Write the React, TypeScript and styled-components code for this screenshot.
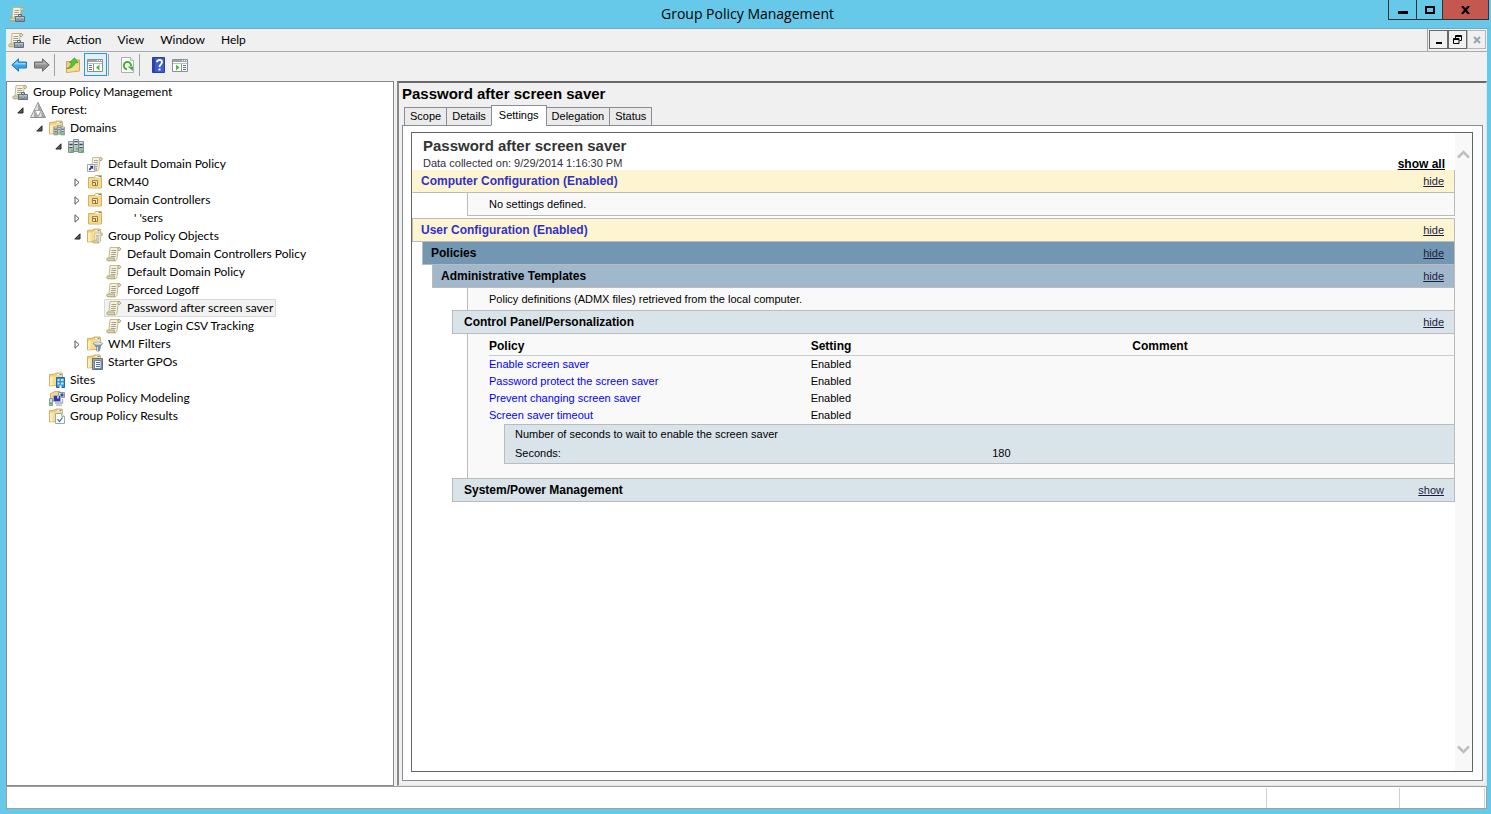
import React from 'react';
import styled, { createGlobalStyle } from 'styled-components';

const ui = 'Lato, "Open Sans", sans-serif';
const titleFont = '"Open Sans", "Noto Sans", sans-serif';
const doc = '"Liberation Sans", Arial, sans-serif';

const Global = createGlobalStyle`
  *, *::before, *::after { box-sizing: border-box; }
  body { margin: 0; background: #66c9ea; color: #000; font: 12px/18px ${ui}; }
  button { margin: 0; padding: 0; border: 0; background: none; color: inherit; font: inherit; }
  h1, h2, h3, p, ul { margin: 0; padding: 0; font-weight: inherit; font-size: inherit; }
  svg { display: block; flex: none; }
`;

const Frame = styled.div`
  min-height: 100vh;
  display: flex;
  flex-direction: column;
  padding: 0 4px 5px 6px;
  background: #66c9ea;
`;

const TitleBar = styled.header`
  display: grid;
  grid-template-columns: 1fr auto 1fr;
  height: 29px;
  margin-right: -2px;
  border-bottom: 1px solid #7fa6bb;
`;
const TitleIcon = styled.div`
  padding: 6px 0 0 3px;
`;
const WindowTitle = styled.h1`
  && { font: 14px/28px ${titleFont}; }
`;
const WindowButtons = styled.div`
  display: flex;
  justify-content: flex-end;
  height: 20px;
`;
const WindowButton = styled.button<{ $w: number; $close?: boolean }>`
  width: ${p => p.$w}px;
  display: grid;
  place-items: center;
  && {
    border: 1px solid #333;
    border-width: 0 ${p => (p.$close ? 1 : 0)}px 1px 1px;
    background: ${p => (p.$close ? '#c45850' : 'transparent')};
  }
`;

const Bars = styled.div`
  background: #f0f0f0;
`;
const MenuRow = styled.div`
  display: flex;
  height: 23px;
  border-bottom: 1px solid #a9abb0;
`;
const MenuBar = styled.nav`
  flex: 1;
  display: flex;
  align-items: center;
  padding-left: 2px;
  border-right: 1px solid #a0a0a0;
`;
const MenuButton = styled.button`
  && { padding: 0 8px; line-height: 20px; }
`;
const ChildButtons = styled.div`
  display: flex;
  padding: 1px 1px 2px 1px;
`;
const ChildButton = styled.button<{ $off?: boolean }>`
  && { border: 1px solid ${p => (p.$off ? '#b4b8bc' : '#696969')}; }
  width: 19px;
  display: grid;
  place-items: center;
`;

const Toolbar = styled.div`
  display: flex;
  align-items: center;
  height: 29px;
  padding: 0 1px 4px;
`;
const Tool = styled.button<{ $on?: boolean }>`
  width: 23px;
  height: 23px;
  display: grid;
  place-items: center;
  && {
    border: 1px solid ${p => (p.$on ? '#2a98dd' : 'transparent')};
    background: ${p => (p.$on ? '#e3f0f9' : 'none')};
  }
`;
const ToolGap = styled.span`
  width: 1px;
  height: 22px;
  margin: 0 6px 0 1px;
  background: #a0a0a0;
`;

const Main = styled.main`
  flex: 1;
  display: flex;
  gap: 3px;
  background: #f0f0f0;
`;
const TreePane = styled.nav`
  width: 388px;
  flex: none;
  padding-top: 1px;
  background: #fff;
  border: 1px solid #828790;
`;
const TreeList = styled.ul`
  list-style: none;
`;
const TreeRow = styled.li<{ $level: number }>`
  display: flex;
  align-items: center;
  height: 18px;
  padding-left: ${p => (p.$level ? p.$level * 19 - 16 : 3)}px;
`;
const Expander = styled.span`
  width: 18px;
  padding: 1px 0 0 7px;
`;
const TreeItem = styled.button<{ $selected?: boolean }>`
  display: flex;
  align-items: center;
  gap: 5px;
  height: 18px;
  && {
    padding: 0 2px 0 1px;
    border: 1px solid ${p => (p.$selected ? '#dadada' : 'transparent')};
    background: ${p => (p.$selected ? '#f2f2f2' : 'none')};
    line-height: 16px;
    white-space: nowrap;
  }
`;
const TreeLabel = styled.span<{ $indent?: boolean }>`
  padding-left: ${p => (p.$indent ? 26 : 0)}px;
`;

const DetailPane = styled.section`
  flex: 1;
  min-width: 0;
  display: flex;
  flex-direction: column;
  padding: 0 3px 4px 3px;
  border: 1px solid #696969;
  border-width: 2px 1px 1px 2px;
  border-color: #696969 #e3e3e3 #e3e3e3 #8a8a8a;
`;
const PaneTitle = styled.h2`
  && { font: bold 15px/22px ${doc}; }
`;
const Tabs = styled.div`
  position: relative;
  z-index: 1;
  display: flex;
  align-items: flex-end;
  height: 21px;
  padding-left: 2px;
  margin-bottom: -1px;
`;
const Tab = styled.button<{ $active?: boolean }>`
  && {
    height: ${p => (p.$active ? 21 : 19)}px;
    padding: 0 ${p => (p.$active ? 7 : 5)}px;
    border: 1px solid #898c95;
    border-bottom-color: ${p => (p.$active ? '#fff' : '#898c95')};
    background: ${p => (p.$active ? '#fff' : '#ebebeb')};
    font: 11px/17px ${doc};
  }
  & + & { margin-left: -1px; }
`;
const TabPanel = styled.div`
  flex: 1;
  display: flex;
  padding: 6px 9px 8px 8px;
  background: #fff;
  border: 1px solid #898c95;
`;
const ReportFrame = styled.div`
  flex: 1;
  display: flex;
  border: 1px solid #646464;
  font: 11px/17px ${doc};
`;
const Report = styled.article`
  flex: 1;
  min-width: 0;
`;
const Scrollbar = styled.div`
  width: 17px;
  display: flex;
  flex-direction: column;
  justify-content: space-between;
  align-items: center;
  padding: 17px 0;
  background: #f8f8f8;
`;

const ReportHead = styled.header`
  display: flex;
  justify-content: space-between;
  height: 37px;
  padding: 3px 10px 0 11px;
  color: #333;
`;
const ReportTitle = styled.h2`
  && { font: bold 15px/19px ${doc}; }
`;
const ShowAll = styled.a`
  align-self: flex-end;
  color: #000;
  font-weight: bold;
  font-size: 12px;
  line-height: 12px;
`;

type Tone = 'main' | 'policies' | 'templates' | 'group';
const tones: Record<Tone, { bg: string; fg: string; indent: number; pad: number }> = {
  main: { bg: '#fdf5d2', fg: '#3131c8', indent: 0, pad: 8 },
  policies: { bg: '#7397b3', fg: '#000', indent: 10, pad: 8 },
  templates: { bg: '#a1b8cc', fg: '#000', indent: 20, pad: 8 },
  group: { bg: '#d9e3ea', fg: '#000', indent: 40, pad: 11 },
};
const Bar = styled.div<{ $tone: Tone; $first?: boolean }>`
  position: relative;
  display: flex;
  justify-content: space-between;
  height: ${p => (p.$first ? 23 : 24)}px;
  margin-left: ${p => tones[p.$tone].indent}px;
  margin-bottom: -1px;
  padding: 0 10px 0 ${p => tones[p.$tone].pad}px;
  line-height: 22px;
  color: ${p => tones[p.$tone].fg};
  background: ${p => tones[p.$tone].bg};
  border: 1px solid #bbb;
  ${p => p.$first && 'border-top: 0; border-left-color: #fdf5d2;'}
`;
const BarTitle = styled.h3`
  && { font-size: 12px; font-weight: bold; }
`;
const Toggle = styled.a`
  color: #1c1c3c;
`;
const Detail = styled.div<{ $gap?: boolean; $table?: boolean }>`
  margin: 0 0 ${p => (p.$gap ? 2 : -1)}px 55px;
  padding: ${p => (p.$table ? '4px 0 14px 21px' : '3px 0 2px 21px')};
  background: #f9f9f9;
  border: 1px solid #bbb;
`;

const PolicyTable = styled.table`
  width: 100%;
  table-layout: fixed;
  border-collapse: collapse;
  th, td { padding: 0; text-align: left; font-weight: normal; }
  thead th { font: bold 12px/17px ${doc}; border-bottom: 1px solid #ccc; }
`;
const PolicyLink = styled.a`
  color: #00f;
  text-decoration: none;
`;
const SubTable = styled.table`
  width: calc(100% - 15px);
  margin-left: 15px;
  table-layout: fixed;
  border-collapse: collapse;
  background: #d9e3ea;
  border: 1px solid #bbb;
  border-right: 0;
  && td { padding: 1px 10px; }
  && td + td { padding-left: 13px; }
`;

const StatusBar = styled.footer`
  display: flex;
  justify-content: flex-end;
  height: 23px;
  padding: 1px 1px 0;
  background: #fff;
  border: 1px solid #a0a0a0;
`;
const StatusCell = styled.span<{ $w: number }>`
  width: ${p => p.$w}px;
  border-right: 1px solid #d0d0d0;
`;

/* ---- Icons ---- */

const Svg = ({ children, w = 16 }: { children: React.ReactNode; w?: number }) => (
  <svg width={w} height="16" viewBox={`0 0 ${w} 16`} aria-hidden="true">{children}</svg>
);

const ScrollShape = () => (
  <>
    <path d="M4 1.5h9c1 0 1.200 2.500.2 3H12l-1 8.200c-.1 1.300-.8 1.800-2 1.800H2L3 12z" fill="#f8f2d8" stroke="#bdb28e" strokeWidth=".9" />
    <path d="M1.800 12h7c-.9.8-.6 2.200.4 2.800H1.800C.3 14.700.3 12.100 1.800 12z" fill="#e2d7ac" stroke="#a0966f" strokeWidth=".8" />
    <path d="M12.200 4.500c-.8-1-.5-2.800.8-3 2.200.1 2.200 2.900.4 3z" fill="#e6dbb2" stroke="#a0966f" strokeWidth=".8" />
    <path d="M5.500 4.500h4.800M5.300 6.500h4.800M5 8.500h4.800M4.800 10.500h4.800" stroke="#a3a09c" />
  </>
);
const FolderShape = () => (
  <>
    <path d="M.5 2.500 6 2l1-1h6l.5 1.500V13L.5 14z" fill="#f0cf74" stroke="#d0aa58" strokeWidth=".9" />
    <path d="M8 1.500h5v2H8z" fill="#fff" stroke="#c9b27c" strokeWidth=".6" />
    <path d="M10.500 2h2v1h-2z" fill="#3f9bd8" />
    <path d="M1 4.500 6.500 4l1-1H13v9.500L1 13.500z" fill="#f8dc90" />
    <path d="M1 5v8.500l2.500-.2V4.800z" fill="#fdeebb" />
  </>
);
const Servers = () => (
  <>
    <path d="M5.500 1.500h5v12h-5z" fill="#b9c4cc" stroke="#7a868f" strokeWidth=".9" />
    <path d="M.5 3.500h5v11h-5z" fill="#a9b6bf" stroke="#7a868f" strokeWidth=".9" />
    <path d="M10.500 3.500h5v11h-5z" fill="#a9b6bf" stroke="#7a868f" strokeWidth=".9" />
    <path d="M6.500 3.500h3M6.500 6.500h3M1.500 6.500h3M1.500 9.500h3M11.500 6.500h3M11.500 9.500h3" stroke="#3d4850" />
    <path d="M1.500 4.500h3M11.500 4.500h3M6.500 2.500h3M6.500 5.500h3M1.500 8.500h3M11.500 8.500h3" stroke="#e6edf1" />
    <path d="M3 12h2v2H3zM8 10h2v2H8zM13 12h2v2h-2z" fill="#4bd62a" />
  </>
);

const icons: Record<string, React.ReactNode> = {
  root: (
    <>
      <ScrollShape />
      <path d="M9.500 10.500V8.500h3v2" fill="none" stroke="#5a6872" />
      <path d="M6.500 10.500h9v5h-9z" fill="#8699a6" stroke="#596973" strokeWidth=".9" />
      <path d="M7 11h8v1.500H7z" fill="#b9c8d1" />
      <path d="M10 12h2v1.800h-2z" fill="#f1f1e8" stroke="#596973" strokeWidth=".5" />
    </>
  ),
  forest: (
    <>
      <path d="M8 .5 15.500 15.500H.5z" fill="#c4c4c4" stroke="#858585" strokeWidth=".9" />
      <path d="M8 1.500V8H4.700zM4.200 9v6H1.200zM11.500 9v6H8.500z" fill="#e4e4e4" />
      <path d="M8 1.500 11.300 8H8zM4.200 9l3.200 6H4.200zM11.500 9l3.300 6h-3.300z" fill="#a4a4a4" />
      <path d="M4.800 8.500h6.400L8 14.500z" fill="#fff" stroke="#8a8a8a" strokeWidth=".7" />
    </>
  ),
  domains: (
    <>
      <FolderShape />
      <g transform="translate(4.500 4.500) scale(.72)"><Servers /></g>
    </>
  ),
  domain: <Servers />,
  link: (
    <>
      <g transform="translate(2 0) scale(.9 1)"><ScrollShape /></g>
      <path d="M.5 8.500h7v7h-7z" fill="#fff" stroke="#a2a2b8" />
      <path d="M2.500 9.800H6.200v3.700L5 12.300 2.800 14.500 1.600 13.300 3.800 11z" fill="#33309a" />
    </>
  ),
  ou: (
    <>
      <path d="M1.500 3.500h6l1-2h6v12.500h-13z" fill="#f5d581" stroke="#cfa85a" strokeWidth=".9" />
      <path d="M8.500 2h5.500v1.500H8.500z" fill="#fff" />
      <path d="M11.500 2H14v1h-2.500z" fill="#3f9bd8" />
      <path d="M2 4.500h12v9H2z" fill="#f7d98a" />
      <path d="M5.500 6.500h5v5h-5z" fill="#f9e8b8" stroke="#9c8244" />
      <path d="M6 8.500h2.500v3" fill="none" stroke="#7c672f" />
    </>
  ),
  gpos: (
    <>
      <FolderShape />
      <g transform="translate(5 4) scale(.74)"><ScrollShape /></g>
    </>
  ),
  gpo: <ScrollShape />,
  wmi: (
    <>
      <FolderShape />
      <path d="M6.500 7.500c0-1.500 9-1.500 9 0L12.300 11.500V15h-2.500v-3.500z" fill="#7799b5" stroke="#5b7a94" strokeWidth=".8" />
      <ellipse cx="11" cy="7.500" rx="4" ry="1.200" fill="#dbe7f0" />
      <path d="M10.500 11V15" stroke="#cfe0ec" />
    </>
  ),
  starter: (
    <>
      <FolderShape />
      <path d="M5.500 4.500h10v11h-10z" fill="#98a2b0" stroke="#667080" />
      <path d="M7.500 6.500h6.500v8H7.500z" fill="#fff" stroke="#5c7aa8" strokeWidth=".9" />
      <path d="M9 8.500h4M9 10.500h4M9 12.500h4" stroke="#4c71b4" />
      <path d="M12 4.500h3" stroke="#d0543f" />
    </>
  ),
  sites: (
    <>
      <FolderShape />
      <path d="M7.500 5.500h8v10h-8z" fill="#3a92d8" stroke="#1c66ac" />
      <path d="M8.500 7h2v2h-2zM12 7h2.500v2H12zM8.500 10.500h2v2h-2zM12 10.500h2.500v2H12z" fill="#c8e7fc" />
      <path d="M10.500 13.500h2V16h-2z" fill="#e9f6ff" />
    </>
  ),
  modeling: (
    <>
      <path d="M1.500 3.500 6 1.500h5v9h-9.500z" fill="#f4d889" stroke="#cfa85a" strokeWidth=".9" />
      <path d="M9.500 2.500h6v5h-6z" fill="#dfe8ef" stroke="#8b98a3" />
      <path d="M11.500 3.500h3v3h-3z" fill="#3a43ac" />
      <path d="M4.500 5.500h7v6h-7z" fill="#2b36b4" stroke="#a5b0b9" />
      <path d="M8 6h2v2.500H8z" fill="#a9b9f4" />
      <path d="M.5 8.500h3v7h-3z" fill="#d2d9dd" stroke="#8b98a3" />
      <path d="M1 12.500h2v2H1z" fill="#39c42b" />
      <path d="M6 13h7.500V9M7 15.200h6" fill="none" stroke="#a2adb5" strokeWidth="1.300" />
    </>
  ),
  results: (
    <>
      <FolderShape />
      <path d="M6.500 5.500h6l3 3v7h-9z" fill="#fff" stroke="#9aa6b2" />
      <path d="M12.500 5.500v3h3" fill="#dfe6ec" stroke="#9aa6b2" strokeWidth=".8" />
      <path d="m8.500 11 2 2.500L13.500 9.500" fill="none" stroke="#2f6fb4" strokeWidth="1.200" />
    </>
  ),
};

const Icon = ({ name }: { name: string }) => <Svg>{icons[name]}</Svg>;

const Arrow = ({ forward }: { forward?: boolean }) => (
  <Svg>
    <g transform={forward ? 'translate(16 0) scale(-1 1)' : undefined}>
      <path d="M.8 8 7.500 1.800V5h8v6h-8v3.200z" fill={forward ? '#8f8f8f' : '#35a6ea'} stroke={forward ? '#6a6a6a' : '#2878b0'} />
      <path d="M2.500 7.500 6.700 3.700V6h8v1.500z" fill={forward ? '#b5b5b5' : '#8fd5fa'} />
    </g>
  </Svg>
);
const UpFolder = () => (
  <Svg>
    <path d="M1.500 4.500h5l1.500-1.500h6.500V14l-13 1.500z" fill="#edcb78" stroke="#c9a860" />
    <path d="M2 8.500 14 7v6.500L2 15z" fill="#f8dc94" />
    <path d="M1.500 11.500C4.500 10.500 6 8.500 6.500 5.500H4.500L9.500 .8l3.500 4.700H10.500C9.500 9 6 11.800 1.500 11.500z" fill="#58c435" stroke="#3c9a28" strokeWidth=".7" />
  </Svg>
);
const PanelIcon = ({ right }: { right?: boolean }) => (
  <Svg w={17}>
    <path d="M.5 2.500h15v12H.5z" fill="#fff" stroke="#8a9097" />
    <path d="M1 3h14v2H1z" fill="#9da3aa" />
    <path d="M10 3.500h1M12 3.500h1M14 3.500h1" stroke="#fff" />
    <path d="M1 6.500h14" stroke="#b8bdc2" />
    {right ? (
      <>
        <path d="M9.500 7v7" stroke="#8c9299" />
        <path d="m4 7.500 3.500 3L4 13.500z" fill="#4fba33" />
        <path d="M11 8.500h3M11 10.500h3M11 12.500h3" stroke="#5f7488" />
      </>
    ) : (
      <>
        <path d="M6.500 7v7" stroke="#8c9299" />
        <path d="m12.500 7.500-3.500 3 3.500 3z" fill="#4fba33" />
        <path d="M2 8.500h3M2 10.500h3M2 12.500h3" stroke="#5f7488" />
      </>
    )}
  </Svg>
);
const Refresh = () => (
  <Svg>
    <path d="M2.500.5h9l3 3v12h-12z" fill="#fff" stroke="#a9afb5" />
    <path d="M11.500.5v3h3" fill="#e4e8eb" stroke="#a9afb5" strokeWidth=".8" />
    <path d="M8 12.200A3.600 3.600 0 1 1 12 9" fill="none" stroke="#3fb02c" strokeWidth="2" />
    <path d="M8.500 9.500h5.500V14z" fill="#3fb02c" />
  </Svg>
);
const Help = () => (
  <Svg>
    <path d="M2.500.5h12v15h-12z" fill="#3f5ccb" stroke="#2b409c" />
    <path d="M3 1h2v14H3z" fill="#2c45a4" />
    <path d="M7 5.300C7 2.200 12 2.200 12 5.300c0 2-2.500 2.200-2.500 4.700" fill="none" stroke="#fff" strokeWidth="1.800" />
    <path d="M8.500 11.500h2v2h-2z" fill="#fff" />
  </Svg>
);

const Chevron = ({ down }: { down?: boolean }) => (
  <svg width="13" height="9" viewBox="0 0 13 9" aria-hidden="true">
    <path d={down ? 'M1 1.500 6.500 7 12 1.500' : 'M1 7.500 6.500 2 12 7.500'} fill="none" stroke="#bfbfbf" strokeWidth="2.500" />
  </svg>
);

/* ---- Data ---- */

type Node = { icon: string; label: string; level: number; open?: boolean; selected?: boolean; indent?: boolean };
const nodes: Node[] = [
  { icon: 'root', label: 'Group Policy Management', level: 0 },
  { icon: 'forest', label: 'Forest:', level: 1, open: true },
  { icon: 'domains', label: 'Domains', level: 2, open: true },
  { icon: 'domain', label: '', level: 3, open: true },
  { icon: 'link', label: 'Default Domain Policy', level: 4 },
  { icon: 'ou', label: 'CRM40', level: 4, open: false },
  { icon: 'ou', label: 'Domain Controllers', level: 4, open: false },
  { icon: 'ou', label: "' 'sers", level: 4, open: false, indent: true },
  { icon: 'gpos', label: 'Group Policy Objects', level: 4, open: true },
  { icon: 'gpo', label: 'Default Domain Controllers Policy', level: 5 },
  { icon: 'gpo', label: 'Default Domain Policy', level: 5 },
  { icon: 'gpo', label: 'Forced Logoff', level: 5 },
  { icon: 'gpo', label: 'Password after screen saver', level: 5, selected: true },
  { icon: 'gpo', label: 'User Login CSV Tracking', level: 5 },
  { icon: 'wmi', label: 'WMI Filters', level: 4, open: false },
  { icon: 'starter', label: 'Starter GPOs', level: 4 },
  { icon: 'sites', label: 'Sites', level: 2 },
  { icon: 'modeling', label: 'Group Policy Modeling', level: 2 },
  { icon: 'results', label: 'Group Policy Results', level: 2 },
];
const policies = [
  'Enable screen saver',
  'Password protect the screen saver',
  'Prevent changing screen saver',
  'Screen saver timeout',
];

const Section = ({ tone, title, action = 'hide', first }: { tone: Tone; title: string; action?: string; first?: boolean }) => (
  <Bar $tone={tone} $first={first}>
    <BarTitle>{title}</BarTitle>
    <Toggle href="#">{action}</Toggle>
  </Bar>
);

export default function App() {
  return (
    <>
      <Global />
      <Frame>
        <TitleBar>
          <TitleIcon><Icon name="root" /></TitleIcon>
          <WindowTitle>Group Policy Management</WindowTitle>
          <WindowButtons>
            <WindowButton $w={28} aria-label="Minimize">
              <svg width="10" height="10"><path d="M0 6h10v3H0z" /></svg>
            </WindowButton>
            <WindowButton $w={26} aria-label="Maximize">
              <svg width="10" height="8"><path d="M1 1h8v6H1z" fill="none" stroke="#000" strokeWidth="2" /></svg>
            </WindowButton>
            <WindowButton $w={47} $close aria-label="Close">
              <svg width="10" height="8"><path d="m1 0 7 8M8 0 1 8" stroke="#000" strokeWidth="2.200" /></svg>
            </WindowButton>
          </WindowButtons>
        </TitleBar>

        <Bars>
          <MenuRow>
            <MenuBar>
              <Icon name="root" />
              {['File', 'Action', 'View', 'Window', 'Help'].map(m => <MenuButton key={m}>{m}</MenuButton>)}
            </MenuBar>
            <ChildButtons>
              <ChildButton aria-label="Minimize child window">
                <svg width="8" height="8"><path d="M1 6h6v2H1z" /></svg>
              </ChildButton>
              <ChildButton aria-label="Restore child window">
                <svg width="9" height="9" fill="none" stroke="#000">
                  <path d="M2.500 3V.5h6v5H6.500M2.500 1.500h6M.5 3.500h5.500v5H.5zM.5 4.500H6" />
                </svg>
              </ChildButton>
              <ChildButton $off aria-label="Close child window">
                <svg width="8" height="8"><path d="m1 1 6 6M7 1 1 7" stroke="#9aa3ac" strokeWidth="2" /></svg>
              </ChildButton>
            </ChildButtons>
          </MenuRow>
          <Toolbar>
            <Tool aria-label="Back"><Arrow /></Tool>
            <Tool aria-label="Forward"><Arrow forward /></Tool>
            <ToolGap />
            <Tool aria-label="Up one level"><UpFolder /></Tool>
            <Tool $on aria-label="Show or hide console tree"><PanelIcon /></Tool>
            <ToolGap />
            <Tool aria-label="Refresh"><Refresh /></Tool>
            <ToolGap />
            <Tool aria-label="Help"><Help /></Tool>
            <Tool aria-label="Show or hide action pane"><PanelIcon right /></Tool>
          </Toolbar>
        </Bars>

        <Main>
          <TreePane aria-label="Console tree">
            <TreeList>
              {nodes.map((n, i) => (
                <TreeRow key={i} $level={n.level}>
                  {n.level > 0 && (
                    <Expander>
                      {n.open === true && (
                        <svg width="7" height="7"><path d="M6 .8V6H.8z" fill="#595959" stroke="#262626" /></svg>
                      )}
                      {n.open === false && (
                        <svg width="7" height="9"><path d="M1 .8 5 4.500 1 8.200z" fill="#fff" stroke="#555" /></svg>
                      )}
                    </Expander>
                  )}
                  <TreeItem $selected={n.selected} aria-label={n.label || 'Domain'}>
                    <Icon name={n.icon} />
                    <TreeLabel $indent={n.indent}>{n.label}</TreeLabel>
                  </TreeItem>
                </TreeRow>
              ))}
            </TreeList>
          </TreePane>

          <DetailPane>
            <PaneTitle>Password after screen saver</PaneTitle>
            <Tabs role="tablist">
              {['Scope', 'Details', 'Settings', 'Delegation', 'Status'].map(t => (
                <Tab key={t} role="tab" aria-selected={t === 'Settings'} $active={t === 'Settings'}>{t}</Tab>
              ))}
            </Tabs>
            <TabPanel role="tabpanel">
              <ReportFrame>
                <Report>
                  <ReportHead>
                    <div>
                      <ReportTitle>Password after screen saver</ReportTitle>
                      <p>Data collected on: 9/29/2014 1:16:30 PM</p>
                    </div>
                    <ShowAll href="#">show all</ShowAll>
                  </ReportHead>
                  <Section first tone="main" title="Computer Configuration (Enabled)" />
                  <Detail $gap>No settings defined.</Detail>
                  <Section tone="main" title="User Configuration (Enabled)" />
                  <Section tone="policies" title="Policies" />
                  <Section tone="templates" title="Administrative Templates" />
                  <Detail>Policy definitions (ADMX files) retrieved from the local computer.</Detail>
                  <Section tone="group" title="Control Panel/Personalization" />
                  <Detail $table>
                    <PolicyTable>
                      <thead>
                        <tr><th>Policy</th><th>Setting</th><th>Comment</th></tr>
                      </thead>
                      <tbody>
                        {policies.map(p => (
                          <tr key={p}>
                            <td><PolicyLink href="#">{p}</PolicyLink></td>
                            <td>Enabled</td>
                            <td />
                          </tr>
                        ))}
                        <tr>
                          <td colSpan={3}>
                            <SubTable>
                              <tbody>
                                <tr><td colSpan={2}>Number of seconds to wait to enable the screen saver</td></tr>
                                <tr><td>Seconds:</td><td>180</td></tr>
                              </tbody>
                            </SubTable>
                          </td>
                        </tr>
                      </tbody>
                    </PolicyTable>
                  </Detail>
                  <Section tone="group" title="System/Power Management" action="show" />
                </Report>
                <Scrollbar><Chevron /><Chevron down /></Scrollbar>
              </ReportFrame>
            </TabPanel>
          </DetailPane>
        </Main>

        <StatusBar>
          <StatusCell $w={133} />
          <StatusCell $w={133} />
          <StatusCell $w={85} />
        </StatusBar>
      </Frame>
    </>
  );
}
